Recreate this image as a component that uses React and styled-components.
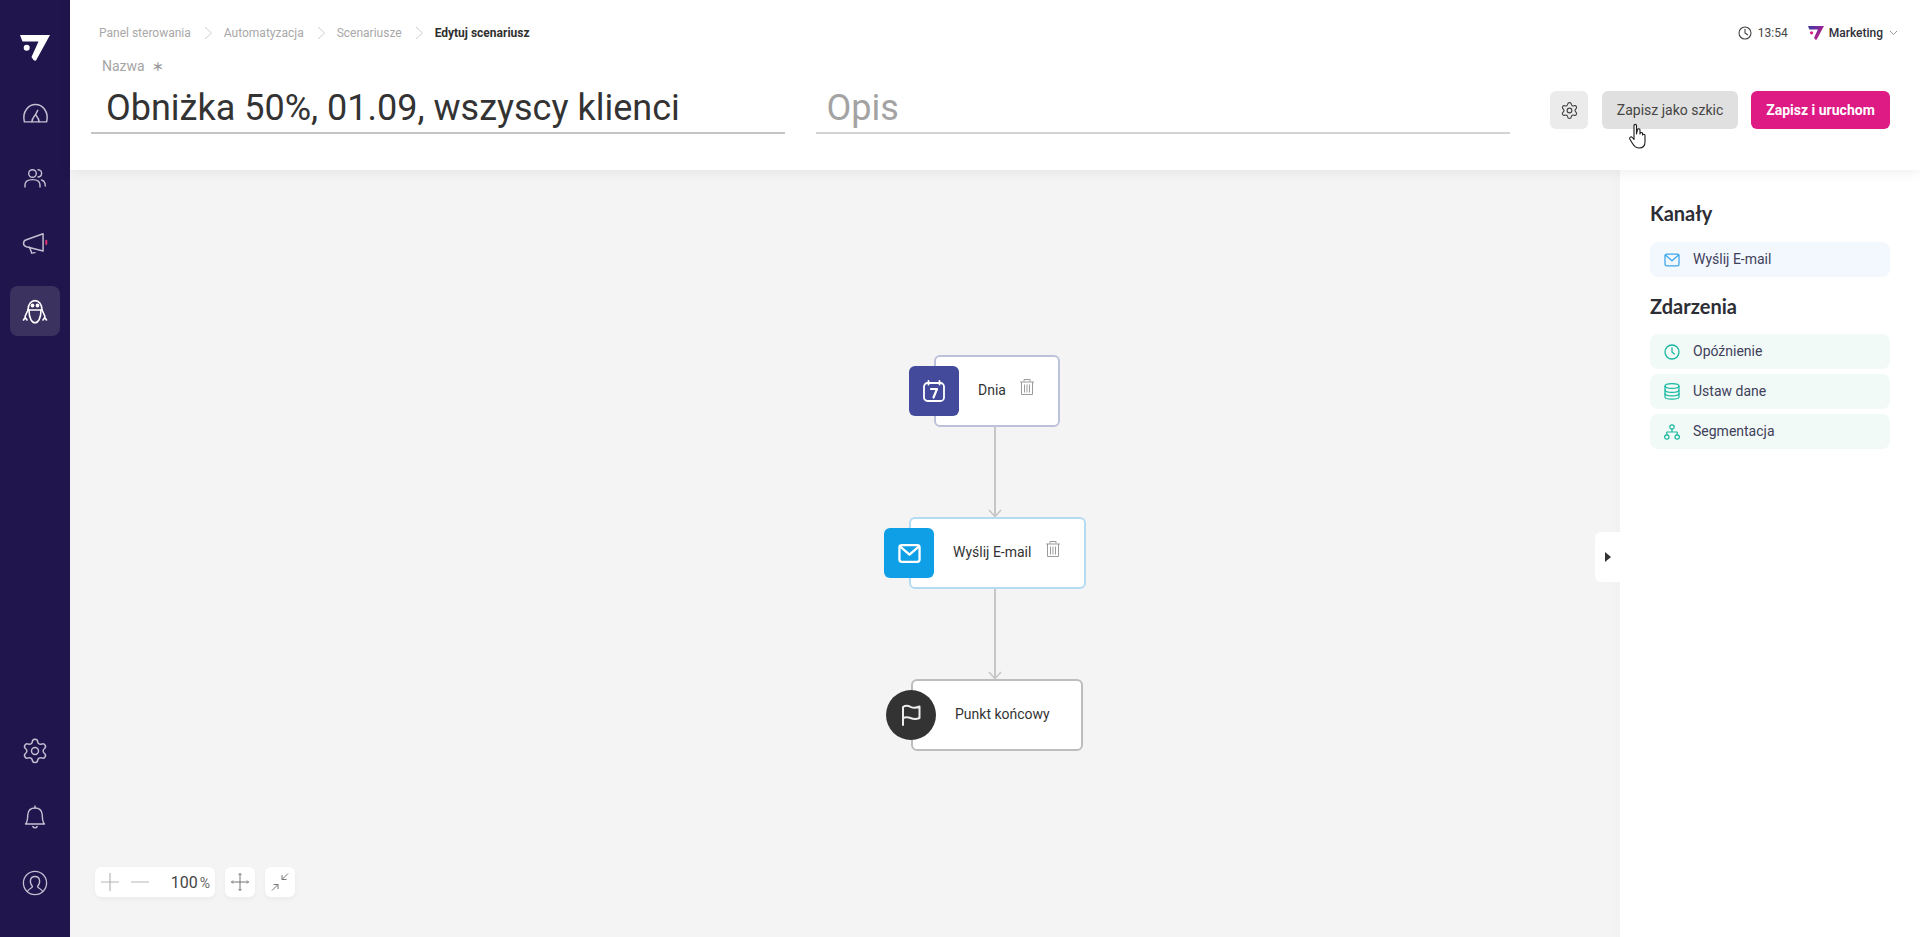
import React from "react";
import styled, { createGlobalStyle } from "styled-components";
import { Settings } from "lucide-react";

const Global = createGlobalStyle`
  html, body { margin: 0; padding: 0; height: 100%; overflow: hidden; }
  body { font-family: Roboto, "Liberation Sans", sans-serif; color: #333; background: #f4f4f4; }
  #root { height: 100%; }
  * { box-sizing: border-box; }
`;

const Shell = styled.div`display: flex; width: 1920px; height: 937px; overflow: hidden;`;
const Sidebar = styled.nav`
  width: 70px; flex: none; background: #20164d; display: flex; flex-direction: column;
  align-items: center; padding-top: 30px; padding-bottom: 29px;
`;
const LogoSlot = styled.div`height: 36px; display: flex; align-items: center; justify-content: center; margin-bottom: 22px;`;
const NavItem = styled.div`
  width: 50px; height: 50px; border-radius: 8px; display: flex; align-items: center; justify-content: center;
  margin-bottom: ${p => p.$gap ?? 16}px; background: ${p => (p.$active ? "#3b3260" : "transparent")};
  color: ${p => (p.$active ? "#ffffff" : "#c3c0d2")};
`;
const NavSpacer = styled.div`flex: 1;`;
const Main = styled.div`flex: 1; min-width: 0; display: flex; flex-direction: column;`;
const Header = styled.header`
  height: 170px; flex: none; background: #fff; position: relative; z-index: 2;
  box-shadow: 0 2px 12px rgba(0,0,0,.07); padding: 0 30px 0 21px;
`;
const TopRow = styled.div`height: 66px; padding: 24px 0 0 8px; margin-right: -8px; display: flex; align-items: flex-start; justify-content: space-between;`;
const Crumbs = styled.div`display: flex; align-items: center; height: 18px; font-size: 12px;`;
const Crumb = styled.span`color: ${p => (p.$current ? "#2f2f2f" : "#a8a8a8")}; font-weight: ${p => (p.$current ? 700 : 400)};`;
const CrumbSep = styled.svg`width: 10px; height: 14px; margin: 0 11px 0 12px; stroke: #cfcfcf; fill: none; stroke-width: 1;`;
const Status = styled.div`display: flex; align-items: center; height: 18px; font-size: 12px; color: #444;`;
const Time = styled.span`margin: 0 20px 0 6px;`;
const Workspace = styled.span`font-weight: 500; color: #2f2f3a; margin: 0 6px 0 5px;`;
const FormRow = styled.div`display: flex; align-items: flex-start;`;
const Field = styled.div`width: ${p => p.$w}px; margin-right: ${p => p.$mr}px; position: relative;`;
const Label = styled.div`
  height: 24px; margin-top: -12px; padding-left: 11px; font-size: 14px; color: #a5a5a5; display: flex; align-items: center;
`;
const Star = styled.span`font-size: 14px; margin-left: 7px; color: #999;`;
const TitleInput = styled.div`
  height: 56px; border-bottom: 2px solid ${p => (p.$muted ? "#d3d3d3" : "#c4c4c4")}; padding-left: ${p => (p.$muted ? 11 : 15)}px;
  font-size: 36px; line-height: 60px; color: ${p => (p.$muted ? "#a3a3a3" : "#333")}; white-space: nowrap; margin-top: ${p => (p.$muted ? 12 : 0)}px;
`;
const Actions = styled.div`display: flex; align-items: center; margin: 25px 0 0 40px; position: relative;`;
const IconBtn = styled.div`width: 38px; height: 38px; border-radius: 6px; background: #ebebeb; display: flex; align-items: center; justify-content: center; margin-right: 14px; color: #444;`;
const Btn = styled.div`
  height: 38px; border-radius: 6px; display: flex; align-items: center; justify-content: center; font-size: 14px;
  width: ${p => p.$w}px; margin-right: ${p => p.$mr || 0}px;
  background: ${p => (p.$primary ? "#de1a85" : "#e0e0e0")}; color: ${p => (p.$primary ? "#fff" : "#444")}; font-weight: ${p => (p.$primary ? 700 : 400)};
`;
const Cursor = styled.svg`position: absolute; left: 78px; top: 32px; width: 20px; height: 26px;`;
const Body = styled.div`flex: 1; display: flex; min-height: 0;`;
const Canvas = styled.div`flex: 1; position: relative; background: #f4f4f4;`;
const Wire = styled.div`position: absolute; left: ${p => p.$x}px; top: ${p => p.$y}px; width: 2px; height: ${p => p.$h}px; background: #c6c6c6;`;
const Arrow = styled.svg`position: absolute; left: ${p => p.$x}px; top: ${p => p.$y}px; width: 14px; height: 9px; stroke: #c6c6c6; fill: none; stroke-width: 1.6;`;
const Node = styled.div`
  position: absolute; left: ${p => p.$x}px; top: ${p => p.$y}px; width: ${p => p.$w}px; height: 72px;
  background: #fff; border: 2px solid ${p => p.$border}; border-radius: 6px; font-size: 14px; color: #333;
`;
const NodeText = styled.span`position: absolute; left: 42px; top: 24px; line-height: 18px; white-space: nowrap;`;
const NodeBadge = styled.div`
  position: absolute; left: -27px; top: 9px; width: 50px; height: 50px; border-radius: ${p => (p.$round ? "50%" : "6px")};
  background: ${p => p.$bg}; display: flex; align-items: center; justify-content: center; color: #fff;
`;
const Trash = styled.svg`position: absolute; left: ${p => p.$l}px; top: 21px; width: 16px; height: 18px; stroke: #9b9b9b; fill: none; stroke-width: 1;`;
const ZoomTools = styled.div`position: absolute; left: 25px; top: 697px; display: flex; gap: 10px;`;
const ZoomBox = styled.div`
  height: 30px; width: ${p => p.$w}px; background: #fff; border-radius: 6px; box-shadow: 0 2px 5px rgba(0,0,0,.04);
  display: flex; align-items: center; justify-content: center; color: #444;
`;
const ZoomLevel = styled.span`font-size: 16px; color: #444; margin-left: auto; margin-right: 5px; white-space: nowrap;`;
const Pct = styled.span`font-size: 14px; margin-left: 2px; color: #666;`;
const Panel = styled.aside`width: 300px; flex: none; background: #fff; position: relative; padding: 28px 30px 0; box-shadow: -4px 0 10px rgba(0,0,0,.015);`;
const PanelTab = styled.div`
  position: absolute; left: -25px; top: 362px; width: 25px; height: 50px; background: #fff; border-radius: 6px 0 0 6px;
  display: flex; align-items: center; justify-content: center;
`;
const Tri = styled.span`width: 0; height: 0; border-left: 6px solid #333; border-top: 5px solid transparent; border-bottom: 5px solid transparent;`;
const H = styled.h3`
  margin: 0 0 ${p => p.$mb}px; font-family: Lato, sans-serif; font-weight: 700; font-size: 20px; line-height: 30px; color: #2d2d35;
`;
const Item = styled.div`
  height: 35px; border-radius: 8px; display: flex; align-items: center; padding: 0 0 2px 14px; margin-bottom: ${p => p.$mb ?? 5}px;
  background: ${p => p.$bg}; color: ${p => p.$c}; font-size: 14px;
`;
const ItemIcon = styled.span`width: 16px; height: 18px; display: flex; align-items: center; margin-right: 13px; flex: none; position: relative; top: 1px;`;
const ItemText = styled.span`color: #40405a;`;

const S = { fill: "none", stroke: "currentColor", strokeLinecap: "round", strokeLinejoin: "round" };

const Logo = () => (
  <svg width="30" height="26" viewBox="0 0 30 26">
    <path d="M0 0 H30 L16 25.5 Q15 26 13.5 25 L11.5 22 L18.5 6.5 H2.5 Z" fill="#fff" />
    <circle cx="6.7" cy="12.7" r="3" fill="#fff" />
  </svg>
);
const BrandMark = () => (
  <svg width="16" height="14" viewBox="0 0 30 26">
    <defs>
      <linearGradient id="brand" x1="0" y1="0" x2="1" y2="0.6">
        <stop offset="0" stopColor="#3d3ba0" />
        <stop offset="0.55" stopColor="#7a2a9a" />
        <stop offset="1" stopColor="#de1a85" />
      </linearGradient>
    </defs>
    <path d="M0 0 H30 L16 25.5 Q15 26 13.5 25 L11.5 22 L18.5 6.5 H2.5 Z" fill="url(#brand)" />
    <circle cx="6.7" cy="12.7" r="3" fill="#de1a85" />
  </svg>
);
const MailIcon = ({ s = 16, w = 1.3 }) => (
  <svg width={s} height={s} viewBox="0 0 16 16" {...S} strokeWidth={w}>
    <rect x="1" y="2.2" width="14" height="11.6" rx="1.6" />
    <path d="M1.4 3 L8 8.8 L14.6 3" />
  </svg>
);
const Chevron = () => <path d="M2 1 L8.5 7 L2 13" />;
const TrashPath = () => <path d="M1 3.5 H15 M5 3 V1 H11 V3 M2.5 3.5 V16 H13.5 V3.5 M5.5 6 V14 M8 6 V14 M10.5 6 V14" />;

export default function App() {
  return (
    <Shell>
      <Global />
      <Sidebar>
        <LogoSlot><Logo /></LogoSlot>
        <NavItem $gap={15}>
          <svg width="29" height="29" viewBox="0 0 26 26" {...S} strokeWidth="1.3">
            <path d="M3 20.5 C0.8 11 7 5 13 5 C19 5 25.2 11 23 20.5 Z" /><path d="M13 14 L15 10.2" /><path d="M9.8 20.5 C10 17 12 15.5 13 14 C14 15.5 16 17 16.2 20.5" />
          </svg>
        </NavItem>
        <NavItem $gap={16}>
          <svg width="24" height="24" viewBox="0 0 24 24" {...S} strokeWidth="1.4">
            <circle cx="9.5" cy="7.5" r="3.8" /><path d="M2 21 V19 C2 15.5 5 13.6 9.5 13.6 C14 13.6 17 15.5 17 19 V21" /><path d="M15 3.8 C18 3.8 18.8 6 18.6 7.6 C18.4 9.4 17 11 15 11" /><path d="M18.5 14 C21 14.6 22.3 16.5 22.3 20" />
          </svg>
        </NavItem>
        <NavItem $gap={17}>
          <svg width="28" height="28" viewBox="0 0 26 26" {...S} strokeWidth="1.35">
            <path d="M20.5 3.5 L5 9 C1.5 10 1.5 14.5 5 15.5 L20.5 19.5 Z" /><path d="M8 16 L10 21.5 L13 21" /><path d="M23.5 10 V13" stroke="#e0356f" strokeWidth="1.8" />
          </svg>
        </NavItem>
        <NavItem $active $gap={0}>
          <svg width="26" height="28" viewBox="0 0 26 28" {...S} strokeWidth="1.6">
            <path d="M6 13 C6 0.5 20 0.5 20 13" /><path d="M6 13 H20" /><path d="M7 13 C7 30 19 30 19 13" />
            <path d="M6 13 L3.2 19 V21.5 M20 13 L22.8 19 V21.5 M1.5 23 L3.2 20.5 L5 23 M21 23 L22.8 20.5 L24.5 23" />
            <circle cx="10.5" cy="8.5" r="1.1" fill="currentColor" /><circle cx="15.5" cy="8.5" r="1.1" fill="currentColor" />
          </svg>
        </NavItem>
        <NavSpacer />
        <NavItem $gap={16}><Settings size={28} strokeWidth={1.25} /></NavItem>
        <NavItem $gap={16}>
          <svg width="24" height="26" viewBox="0 0 24 26" {...S} strokeWidth="1.4">
            <path d="M2.5 20 C5 17.5 4.5 13 4.8 10.5 C5.2 6.5 8 4 12 4 C16 4 18.8 6.5 19.2 10.5 C19.5 13 19 17.5 21.5 20 Z" /><path d="M12 2 V4" /><path d="M9.8 22.5 C11 24.3 13 24.3 14.2 22.5" />
          </svg>
        </NavItem>
        <NavItem $gap={0}>
          <svg width="26" height="26" viewBox="0 0 26 26" {...S} strokeWidth="1.3">
            <circle cx="13" cy="13" r="11.6" /><path d="M5.5 21.5 C6 18.5 10.5 18.5 10.5 16.5 C8.5 14.5 8 12.5 8.5 10 C9 7.5 11 6.5 13 6.5 C15 6.5 17 7.5 17.5 10 C18 12.5 17.5 14.5 15.5 16.5 C15.5 18.5 20 18.5 20.5 21.5" />
          </svg>
        </NavItem>
      </Sidebar>
      <Main>
        <Header>
          <TopRow>
            <Crumbs>
              <Crumb>Panel sterowania</Crumb>
              <CrumbSep viewBox="0 0 10 14"><Chevron /></CrumbSep>
              <Crumb>Automatyzacja</Crumb>
              <CrumbSep viewBox="0 0 10 14"><Chevron /></CrumbSep>
              <Crumb>Scenariusze</Crumb>
              <CrumbSep viewBox="0 0 10 14"><Chevron /></CrumbSep>
              <Crumb $current>Edytuj scenariusz</Crumb>
            </Crumbs>
            <Status>
              <svg width="14" height="14" viewBox="0 0 14 14" {...S} strokeWidth="1.1"><circle cx="7" cy="7" r="6" /><path d="M7 3.2 V7 L9.6 8.8" /></svg>
              <Time>13:54</Time>
              <BrandMark />
              <Workspace>Marketing</Workspace>
              <svg width="9" height="6" viewBox="0 0 9 6" fill="none" stroke="#999" strokeWidth="1"><path d="M1 1 L4.5 4.6 L8 1" /></svg>
            </Status>
          </TopRow>
          <FormRow>
            <Field $w={694} $mr={31}>
              <Label>Nazwa<Star>∗</Star></Label>
              <TitleInput>Obniżka 50%, 01.09, wszyscy klienci</TitleInput>
            </Field>
            <Field $w={695} $mr={0}>
              <TitleInput $muted>Opis</TitleInput>
            </Field>
            <Actions>
              <IconBtn><Settings size={19} strokeWidth={1.4} /></IconBtn>
              <Btn $w={136} $mr={13}>Zapisz jako szkic</Btn>
              <Btn $w={139} $primary>Zapisz i uruchom</Btn>
              <Cursor viewBox="0 0 20 26">
                <path d="M6 2.5 C6 1 8.5 1 8.5 2.5 V11 L9.5 6.5 C10 5.5 12 5.5 12 7 V11 C12.3 9 14.5 9 14.5 10.5 V12 C15 10.8 17 11 17 12.5 V19 C17 23 14.5 25 11 25 C7.5 25 6 23 4.5 20.5 L1.8 16 C1 14.5 3 13 4.3 14.5 L6 16.5 Z" fill="#fff" stroke="#1a1a1a" strokeWidth="1.1" strokeLinejoin="round" />
              </Cursor>
            </Actions>
          </FormRow>
        </Header>
        <Body>
          <Canvas>
            <Wire $x={924} $y={256} $h={92} />
            <Arrow $x={918} $y={339} viewBox="0 0 14 9"><path d="M1 1 L7 7.5 L13 1" /></Arrow>
            <Wire $x={924} $y={418} $h={92} />
            <Arrow $x={918} $y={501} viewBox="0 0 14 9"><path d="M1 1 L7 7.5 L13 1" /></Arrow>
            <Node $x={864} $y={185} $w={126} $border="#bcc2da">
              <NodeBadge $bg="#434a9c">
                <svg width="22" height="22" viewBox="0 0 22 22" {...S} strokeWidth="1.8">
                  <rect x="1" y="3" width="20" height="18" rx="3.5" /><path d="M5.5 1 V4.5" /><path d="M16.5 1 V4.5" /><path d="M8 9 H14 L10.5 17.5" strokeWidth="2.2" />
                </svg>
              </NodeBadge>
              <NodeText>Dnia</NodeText>
              <Trash $l={83} viewBox="0 0 16 17"><TrashPath /></Trash>
            </Node>
            <Node $x={839} $y={347} $w={177} $border="#b3dcf3">
              <NodeBadge $bg="#0f9fe6"><MailIcon s={23} w={1.6} /></NodeBadge>
              <NodeText>Wyślij E-mail</NodeText>
              <Trash $l={134} viewBox="0 0 16 17"><TrashPath /></Trash>
            </Node>
            <Node $x={841} $y={509} $w={172} $border="#bdbdbd">
              <NodeBadge $round $bg="#333333">
                <svg width="22" height="24" viewBox="0 0 22 24" {...S} stroke="#eeeeee" strokeWidth="2"><path d="M3 22 V4 C6 2 8 2.5 10.5 3.8 C13 5 16 5.2 19.5 3.5 V15 C16 16.5 13 16 10.5 15 C8 14 6 13.8 3 15" /></svg>
              </NodeBadge>
              <NodeText>Punkt końcowy</NodeText>
            </Node>
            <ZoomTools>
              <ZoomBox $w={120}>
                <svg width="60" height="20" viewBox="0 0 60 20" fill="none" stroke="#b5b5b5" strokeWidth="1.2" style={{ marginLeft: 6 }}><path d="M9 1 V19 M0 10 H18 M30 10 H48" /></svg>
                <ZoomLevel>100<Pct>%</Pct></ZoomLevel>
              </ZoomBox>
              <ZoomBox $w={30}>
                <svg width="20" height="20" viewBox="0 0 20 20" fill="none" stroke="#777" strokeWidth="1"><path d="M10 1.5 V18.5 M1.5 10 H18.5 M8.5 3 L10 1.5 L11.5 3 M8.5 17 L10 18.5 L11.5 17 M3 8.5 L1.5 10 L3 11.5 M17 8.5 L18.5 10 L17 11.5" /></svg>
              </ZoomBox>
              <ZoomBox $w={30}>
                <svg width="20" height="20" viewBox="0 0 20 20" fill="none" stroke="#777" strokeWidth="1"><path d="M18 1.5 L12 7.5 M12 3 V7.5 H16.5 M2 18.5 L8 12.5 M3.5 12.5 H8 V17" /></svg>
              </ZoomBox>
            </ZoomTools>
          </Canvas>
          <Panel>
            <PanelTab><Tri /></PanelTab>
            <H $mb={14}>Kanały</H>
            <Item $bg="#f3f8fe" $c="#3da7ea" $mb={14}>
              <ItemIcon><MailIcon /></ItemIcon><ItemText>Wyślij E-mail</ItemText>
            </Item>
            <H $mb={13}>Zdarzenia</H>
            <Item $bg="#f2faf8" $c="#17b7a0">
              <ItemIcon>
                <svg width="16" height="16" viewBox="0 0 16 16" {...S} strokeWidth="1.3"><circle cx="8" cy="8" r="7" /><path d="M8 3.8 V8 L10.4 10" /></svg>
              </ItemIcon><ItemText>Opóźnienie</ItemText>
            </Item>
            <Item $bg="#f2faf8" $c="#17b7a0">
              <ItemIcon>
                <svg width="16" height="17" viewBox="0 0 16 17" {...S} strokeWidth="1.2"><ellipse cx="8" cy="3" rx="7" ry="2.4" /><path d="M1 3 V14 C1 15.3 3 16.2 8 16.2 C13 16.2 15 15.3 15 14 V3" /><path d="M1 7 C1 8.5 3 9.4 8 9.4 C13 9.4 15 8.5 15 7" /><path d="M1 10.5 C1 12 3 12.9 8 12.9 C13 12.9 15 12 15 10.5" /></svg>
              </ItemIcon><ItemText>Ustaw dane</ItemText>
            </Item>
            <Item $bg="#f2faf8" $c="#17b7a0">
              <ItemIcon>
                <svg width="16" height="16" viewBox="0 0 16 16" {...S} strokeWidth="1.2"><circle cx="8" cy="3" r="2.2" /><circle cx="2.8" cy="13" r="2.2" /><circle cx="13.2" cy="13" r="2.2" /><path d="M8 5.2 V8 M2.8 10.8 V8 H13.2 V10.8" /></svg>
              </ItemIcon><ItemText>Segmentacja</ItemText>
            </Item>
          </Panel>
        </Body>
      </Main>
    </Shell>
  );
}
